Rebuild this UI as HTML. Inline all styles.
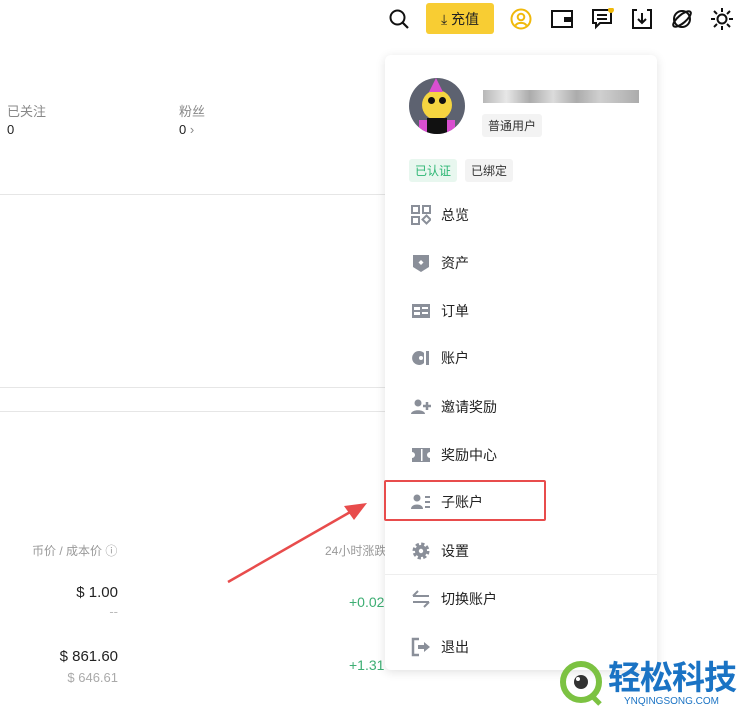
<!DOCTYPE html>
<html><head><meta charset="utf-8"><style>
*{margin:0;padding:0;box-sizing:border-box}
body{width:745px;height:709px;background:#fff;position:relative;overflow:hidden;font-family:"Liberation Sans","Noto Sans CJK SC",sans-serif;color:#222}
.a{position:absolute}
.hl{position:absolute;left:0;width:385px;height:1px;background:#e6e6e6}
.g{color:#888;font-size:13px}
.panel{position:absolute;left:385px;top:55px;width:272px;height:615px;background:#fff;border-radius:6px;box-shadow:0 2px 10px rgba(0,0,0,.12)}
.mi{position:absolute;left:26px;height:20px;display:flex;align-items:center;font-size:14px;color:#222}
.mi svg{width:20px;height:20px;margin-right:10px}
.tag{position:absolute;font-size:12px;padding:3px 6px;border-radius:3px;background:#f3f3f3;color:#333}
</style></head><body>
<svg class="a" style="left:388px;top:8px" width="22" height="22" viewBox="0 0 22 22"><circle cx="9.5" cy="9.5" r="7" fill="none" stroke="#111" stroke-width="2"/><path d="M14.5 14.5L20 20" stroke="#111" stroke-width="2.2"/></svg>
<div class="a" style="left:426px;top:3px;width:68px;height:31px;background:#f8cd33;border-radius:3px;font-size:14px;display:flex;align-items:center;justify-content:center;color:#222">⤓ 充值</div>
<svg class="a" style="left:510px;top:8px" width="22" height="22" viewBox="0 0 22 22"><circle cx="11" cy="11" r="9.5" fill="none" stroke="#f0b90b" stroke-width="2"/><circle cx="11" cy="9" r="3.3" fill="none" stroke="#f0b90b" stroke-width="2"/><path d="M5.5 17.5c2-3.5 9-3.5 11 0" fill="none" stroke="#f0b90b" stroke-width="2"/></svg>
<svg class="a" style="left:551px;top:9px" width="22" height="20" viewBox="0 0 22 20"><rect x="1" y="2" width="20" height="16" fill="none" stroke="#111" stroke-width="2"/><rect x="13" y="8" width="8" height="5" fill="#111"/></svg>
<svg class="a" style="left:591px;top:8px" width="24" height="22" viewBox="0 0 24 22"><path d="M2 2h18v13H9l-4 4v-4H2z" fill="none" stroke="#111" stroke-width="2"/><path d="M6 7h10M6 11h10" stroke="#111" stroke-width="2"/><circle cx="20" cy="2" r="3" fill="#f0b90b"/></svg>
<svg class="a" style="left:631px;top:8px" width="22" height="22" viewBox="0 0 22 22"><path d="M6 2H2v18h18V2h-4" fill="none" stroke="#111" stroke-width="2"/><path d="M11 5v10M7 11l4 4 4-4" fill="none" stroke="#111" stroke-width="2"/></svg>
<svg class="a" style="left:670px;top:7px" width="24" height="24" viewBox="0 0 24 24"><circle cx="12" cy="12" r="8" fill="none" stroke="#111" stroke-width="2"/><ellipse cx="12" cy="12" rx="11" ry="4" transform="rotate(-40 12 12)" fill="none" stroke="#111" stroke-width="2"/></svg>
<svg class="a" style="left:710px;top:7px" width="24" height="24" viewBox="0 0 24 24"><circle cx="12" cy="12" r="4.5" fill="none" stroke="#111" stroke-width="2"/><path d="M12 1v4M12 19v4M1 12h4M19 12h4M4 4l3 3M17 17l3 3M20 4l-3 3M7 17l-3 3" stroke="#111" stroke-width="2"/></svg>

<div class="a g" style="left:7px;top:101px">已关注</div>
<div class="a" style="left:7px;top:122px;font-size:13px">0</div>
<div class="a g" style="left:179px;top:101px">粉丝</div>
<div class="a" style="left:179px;top:122px;font-size:13px">0 <span style="color:#888">›</span></div>
<div class="hl" style="top:194px"></div>
<div class="hl" style="top:387px"></div>
<div class="hl" style="top:411px"></div>
<div class="a" style="left:32px;top:542px;font-size:12px;color:#999">币价 / 成本价 ⓘ</div>
<div class="a" style="left:325px;top:542px;font-size:12px;color:#999">24小时涨跌</div>
<div class="a" style="left:40px;top:584px;width:78px;text-align:right;font-size:15px">$ 1.00</div>
<div class="a" style="left:40px;top:604px;width:78px;text-align:right;font-size:13px;color:#bbb">--</div>
<div class="a" style="left:40px;top:648px;width:78px;text-align:right;font-size:15px">$ 861.60</div>
<div class="a" style="left:40px;top:670px;width:78px;text-align:right;font-size:13px;color:#aaa">$ 646.61</div>
<div class="a" style="left:349px;top:594px;font-size:14px;color:#3dae73">+0.02</div>
<div class="a" style="left:349px;top:657px;font-size:14px;color:#3dae73">+1.31</div>

<svg class="a" style="left:0;top:0" width="745" height="709"><path d="M228 582L352 511" stroke="#e84c4c" stroke-width="2.5"/><path d="M367 503L344 506L354 520Z" fill="#e84c4c"/></svg>

<div class="panel">
 <div class="a" style="left:24px;top:23px;width:56px;height:56px;border-radius:50%;background:#5d6270;overflow:hidden">
  <div class="a" style="left:13px;top:12px;width:30px;height:30px;border-radius:50%;background:#f5d540"></div>
  <div class="a" style="left:19px;top:19px;width:7px;height:7px;border-radius:50%;background:#111"></div>
  <div class="a" style="left:30px;top:19px;width:7px;height:7px;border-radius:50%;background:#111"></div>
  <div class="a" style="left:18px;top:40px;width:20px;height:16px;background:#111"></div>
  <div class="a" style="left:10px;top:42px;width:8px;height:14px;background:#d94fd0"></div>
  <div class="a" style="left:38px;top:42px;width:8px;height:14px;background:#d94fd0"></div>
  <div class="a" style="left:20px;top:0;width:0;height:0;border-left:7px solid transparent;border-right:7px solid transparent;border-bottom:14px solid #d94fd0"></div>
 </div>
 <div class="a" style="left:98px;top:35px;width:156px;height:13px;background:linear-gradient(90deg,#999,#ddd 15%,#888 30%,#ccc 45%,#888 60%,#bbb 75%,#888);opacity:.7"></div>
 <div class="tag" style="left:97px;top:59px">普通用户</div>
 <div class="tag" style="left:24px;top:104px;background:#e8f7ef;color:#2bb673">已认证</div>
 <div class="tag" style="left:80px;top:104px">已绑定</div>

 <div class="mi" style="top:150px"><svg viewBox="0 0 20 20"><g fill="none" stroke="#8a8f99" stroke-width="2"><rect x="1" y="1" width="7" height="7"/><rect x="12" y="1" width="7" height="7"/><rect x="1" y="12" width="7" height="7"/><path d="M15.5 10.5l4 4-4 4-4-4z"/></g></svg>总览</div>
 <div class="mi" style="top:198px"><svg viewBox="0 0 20 20"><path d="M2 2h16v12l-8 5-8-5z" fill="#8a8f99"/><path d="M10 7l2.5 2.5L10 12 7.5 9.5z" fill="#fff"/></svg>资产</div>
 <div class="mi" style="top:246px"><svg viewBox="0 0 20 20"><rect x="1" y="3" width="18" height="14" fill="#8a8f99"/><rect x="3" y="6" width="6" height="3" fill="#fff"/><rect x="11" y="6" width="6" height="2" fill="#fff"/><rect x="3" y="11" width="6" height="3" fill="#fff"/><rect x="11" y="11" width="6" height="2" fill="#fff"/></svg>订单</div>
 <div class="mi" style="top:293px"><svg viewBox="0 0 20 20"><path d="M13 5A7 7 0 1 0 13 15V5z" fill="#8a8f99"/><circle cx="10" cy="10" r="2" fill="#fff"/><rect x="15" y="3" width="3" height="14" fill="#8a8f99"/></svg>账户</div>
 <div class="mi" style="top:342px"><svg viewBox="0 0 20 20"><circle cx="7" cy="6" r="3.5" fill="#8a8f99"/><path d="M0 17c0-5 14-5 14 0z" fill="#8a8f99"/><path d="M16 5v8M12 9h8" stroke="#8a8f99" stroke-width="2.5"/></svg>邀请奖励</div>
 <div class="mi" style="top:390px"><svg viewBox="0 0 20 20"><path d="M1 3h18v4a3 3 0 0 0 0 6v4H1v-4a3 3 0 0 0 0-6z" fill="#8a8f99"/><rect x="10" y="4" width="1.5" height="12" fill="#fff"/></svg>奖励中心</div>
 <div class="mi" style="top:437px"><svg viewBox="0 0 20 20"><circle cx="6" cy="6" r="3.5" fill="#8a8f99"/><path d="M0 17c0-6 12-6 12 0z" fill="#8a8f99"/><path d="M14 5h5M14 10h5M14 15h5" stroke="#8a8f99" stroke-width="2"/></svg>子账户</div>
 <div class="mi" style="top:486px"><svg viewBox="0 0 20 20"><circle cx="10" cy="10" r="6.5" fill="none" stroke="#8a8f99" stroke-width="4" stroke-dasharray="3 2.1"/><circle cx="10" cy="10" r="6" fill="#8a8f99"/><circle cx="10" cy="10" r="2.2" fill="#fff"/></svg>设置</div>
 <div class="a" style="left:0;top:519px;width:272px;height:1px;background:#eee"></div>
 <div class="mi" style="top:534px"><svg viewBox="0 0 20 20"><path d="M2 7h16M7 2L2 7M18 13H2M13 18l5-5" fill="none" stroke="#8a8f99" stroke-width="2"/></svg>切换账户</div>
 <div class="mi" style="top:582px"><svg viewBox="0 0 20 20"><path d="M8 2H2v16h6" fill="none" stroke="#8a8f99" stroke-width="2.5"/><path d="M7 8h6V5l6 5-6 5v-3H7z" fill="#8a8f99"/></svg>退出</div>
</div>

<div class="a" style="left:384px;top:480px;width:162px;height:41px;border:2.5px solid #e84c4c;border-radius:2px"></div>

<svg class="a" style="left:560px;top:660px" width="46" height="46" viewBox="0 0 46 46"><circle cx="21" cy="22" r="18" fill="none" stroke="#7cc242" stroke-width="6"/><circle cx="21" cy="22" r="7" fill="#333"/><circle cx="18" cy="19" r="2" fill="#fff"/><path d="M32 36l8 8" stroke="#7cc242" stroke-width="5"/></svg>
<div class="a" style="left:608px;top:660px;font-size:33px;font-weight:bold;color:#1a73c4;white-space:nowrap;line-height:36px;letter-spacing:-1px">轻松科技</div>
<div class="a" style="left:624px;top:696px;font-size:10px;color:#1a73c4;white-space:nowrap;line-height:12px">YNQINGSONG.COM</div>
</body></html>
